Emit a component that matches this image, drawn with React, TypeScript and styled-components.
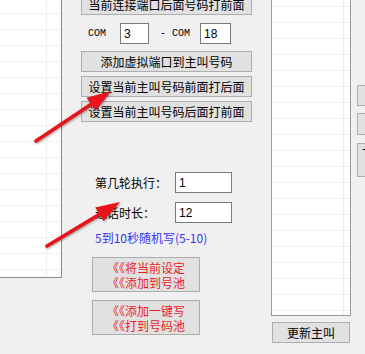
import React from 'react';
import styled, { createGlobalStyle } from 'styled-components';

const GlobalStyle = createGlobalStyle`
  html, body {
    margin: 0;
    padding: 0;
    background: #f0f0f0;
  }
  body {
    font-family: "Noto Sans CJK SC", "Noto Sans", sans-serif;
    font-size: 12px;
    color: #000;
  }
`;

const Window = styled.div`
  position: relative;
  width: 365px;
  height: 354px;
  overflow: hidden;
  display: flex;
  align-items: flex-start;
  background: #f0f0f0;
`;

// list view with light grid lines
const GridList = styled.div<{ $lineAt: number; $colAt: number }>`
  box-sizing: border-box;
  flex-shrink: 0;
  background-color: #fff;
  background-image:
    linear-gradient(
      to right,
      transparent ${({ $colAt }) => $colAt}px,
      #eeeeee ${({ $colAt }) => $colAt}px,
      #eeeeee ${({ $colAt }) => $colAt + 1}px,
      transparent ${({ $colAt }) => $colAt + 1}px
    ),
    repeating-linear-gradient(
      to bottom,
      transparent 0,
      transparent ${({ $lineAt }) => $lineAt}px,
      #efefef ${({ $lineAt }) => $lineAt}px,
      #efefef ${({ $lineAt }) => $lineAt + 1}px,
      transparent ${({ $lineAt }) => $lineAt + 1}px,
      transparent 16px
    );
`;

const LeftList = styled(GridList)`
  width: 62px;
  height: 278px;
  border-right: 1px solid #8c8c8c;
  border-bottom: 1px solid #8c8c8c;
`;

const RightList = styled(GridList)`
  width: 80px;
  height: 326px;
  margin-top: -10px;
  border: 1px solid #9a9a9a;
`;

const Middle = styled.div`
  width: 209px;
  flex-shrink: 0;
  box-sizing: border-box;
  padding-left: 19px;
  margin-top: -6px;
  display: flex;
  flex-direction: column;
  align-items: flex-start;
`;

const Button = styled.button<{ $mt?: number; $w?: number; $h?: number }>`
  box-sizing: border-box;
  width: ${({ $w }) => $w ?? 171}px;
  height: ${({ $h }) => $h ?? 21}px;
  margin: ${({ $mt }) => $mt ?? 0}px 0 0 0;
  padding: 0;
  border: 1px solid #adadad;
  background: #e1e1e1;
  font-family: inherit;
  font-size: 12px;
  line-height: 14px;
  color: #000;
  display: flex;
  align-items: center;
  justify-content: center;
  white-space: nowrap;
  flex-shrink: 0;
`;

const RedButton = styled(Button)`
  flex-direction: column;
  color: #ec1c24;
  margin-left: 11px;
`;

const RedLine = styled.span`
  display: block;
  line-height: 15px;
  height: 15px;
`;

const ComRow = styled.div`
  display: flex;
  align-items: center;
  height: 21px;
  margin-top: 8px;
  padding-left: 7px;
`;

const Mono = styled.span<{ $ml?: number }>`
  font-family: "Liberation Mono", "DejaVu Sans Mono", monospace;
  font-size: 10px;
  margin-left: ${({ $ml }) => $ml ?? 0}px;
  white-space: pre;
`;

const Field = styled.input<{ $w: number; $ml?: number }>`
  box-sizing: border-box;
  width: ${({ $w }) => $w}px;
  height: 21px;
  margin: 0 0 0 ${({ $ml }) => $ml ?? 0}px;
  padding: 0 3px;
  border: 1px solid #7a7a7a;
  background: #fff;
  font-family: "Liberation Sans", "Noto Sans", sans-serif;
  font-size: 12px;
  color: #000;
  outline: none;
`;

const LabelRow = styled.div<{ $mt: number }>`
  display: flex;
  align-items: center;
  height: 21px;
  margin-top: ${({ $mt }) => $mt}px;
  padding-left: 14px;
`;

const Label = styled.span`
  width: 80px;
  white-space: nowrap;
`;

const Hint = styled.div`
  margin-top: 8px;
  padding-left: 14px;
  line-height: 14px;
  color: #3434f8;
  white-space: nowrap;
`;

const RightCol = styled.div`
  display: flex;
  flex-direction: column;
  align-items: flex-start;
  flex-shrink: 0;
`;

const UpdateButton = styled(Button)`
  margin-left: 1px;
`;

const SideCol = styled.div`
  display: flex;
  flex-direction: column;
  margin-left: 6px;
  padding-top: 85px;
  flex-shrink: 0;
`;

const SideButton = styled(Button)`
  align-items: flex-start;
  justify-content: flex-start;
  padding: 3px 0 0 4px;
`;

const Overlay = styled.svg`
  position: absolute;
  inset: 0;
  width: 365px;
  height: 354px;
  pointer-events: none;
  filter: drop-shadow(1px 1px 1px rgba(0, 0, 0, 0.35));
`;

type Pt = [number, number];

const arrowHead = (tail: Pt, tip: Pt) => {
  const dx = tip[0] - tail[0];
  const dy = tip[1] - tail[1];
  const len = Math.hypot(dx, dy);
  const ux = dx / len;
  const uy = dy / len;
  const bx = tip[0] - ux * 24;
  const by = tip[1] - uy * 24;
  const px = -uy * 8;
  const py = ux * 8;
  return {
    base: [bx + ux * 2, by + uy * 2] as Pt,
    points: `${tip[0]},${tip[1]} ${bx + px},${by + py} ${bx - px},${by - py}`,
  };
};

const Arrow: React.FC<{ tail: Pt; tip: Pt }> = ({ tail, tip }) => {
  const head = arrowHead(tail, tip);
  return (
    <g>
      <line
        x1={tail[0]}
        y1={tail[1]}
        x2={head.base[0]}
        y2={head.base[1]}
        stroke="#e8131b"
        strokeWidth={3.6}
        strokeLinecap="round"
      />
      <polygon points={head.points} fill="#e8131b" />
    </g>
  );
};

export default function App() {
  return (
    <>
      <GlobalStyle />
      <Window>
        <LeftList $lineAt={13} $colAt={46} />

        <Middle>
          <Button>当前连接端口后面号码打前面</Button>
          <ComRow>
            <Mono>COM</Mono>
            <Field $w={29} $ml={14} defaultValue="3" />
            <Mono $ml={11}>- COM</Mono>
            <Field $w={31} $ml={10} defaultValue="18" />
          </ComRow>
          <Button $mt={7}>添加虚拟端口到主叫号码</Button>
          <Button $mt={4}>设置当前主叫号码前面打后面</Button>
          <Button $mt={4}>设置当前主叫号码后面打前面</Button>

          <LabelRow $mt={50}>
            <Label>第几轮执行：</Label>
            <Field $w={57} defaultValue="1" />
          </LabelRow>
          <LabelRow $mt={9}>
            <Label>通话时长：</Label>
            <Field $w={57} defaultValue="12" />
          </LabelRow>
          <Hint>5到10秒随机写(5-10)</Hint>

          <RedButton $mt={12} $w={108} $h={35}>
            <RedLine>《《将当前设定</RedLine>
            <RedLine>《《添加到号池</RedLine>
          </RedButton>
          <RedButton $mt={8} $w={108} $h={35}>
            <RedLine>《《添加一键写</RedLine>
            <RedLine>《《打到号码池</RedLine>
          </RedButton>
        </Middle>

        <RightCol>
          <RightList $lineAt={15} $colAt={71} />
          <UpdateButton $mt={6} $w={78}>更新主叫</UpdateButton>
        </RightCol>

        <SideCol>
          <SideButton $w={30} $h={21} />
          <SideButton $mt={7} $w={30} $h={22} />
          <SideButton $mt={8} $w={30} $h={34}>下</SideButton>
        </SideCol>

        <Overlay viewBox="0 0 365 354">
          <Arrow tail={[36, 141]} tip={[111, 91]} />
          <Arrow tail={[47, 246]} tip={[120, 202]} />
        </Overlay>
      </Window>
    </>
  );
}
